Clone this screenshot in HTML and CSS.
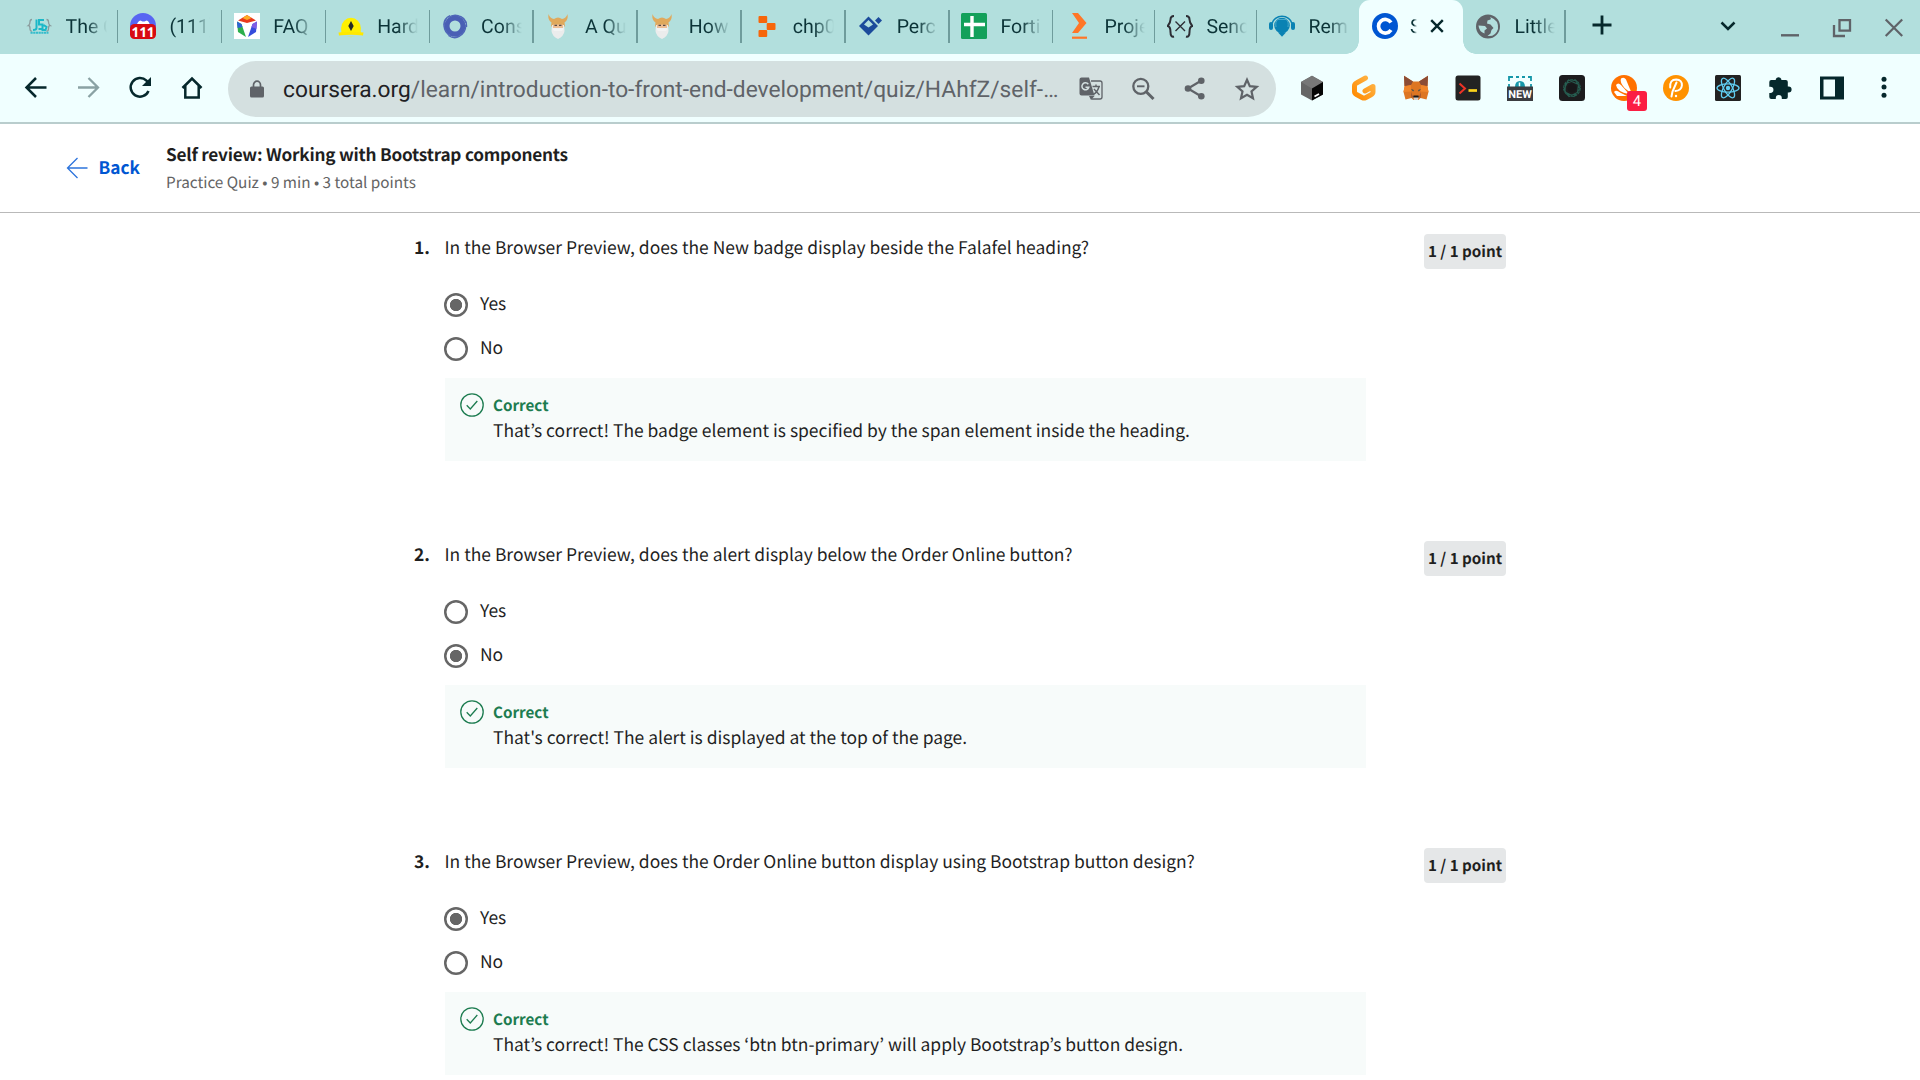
FILE: index.html
```html
<!DOCTYPE html>
<html lang="en">
<head>
<meta charset="utf-8">
<title>Self review: Working with Bootstrap components</title>
<link rel="stylesheet" href="styles.css">
</head>
<body>
<div class="tabstrip">
  <div class="tab">
    <svg class="fav" viewBox="0 0 26 26"><g fill="none" stroke="#8a9a9c" stroke-width="1.3"><path d="M6 6.500Q4 6.500 4 9t-1.500 3.500q1.500 0 1.500 3t2 2.500M20.500 6.500q2 0 2 2.500t1.500 3.500q-1.500 0-1.500 3t-2 2.500"/></g><g fill="none" stroke="#1cb8c8" stroke-width="2"><path d="M10.500 6.500v8.500q0 2-3.500 2M18 7h-5v4.500h3.500v4.500h-4M17.500 12l3 2-1 3h-4"/></g><path d="M4.500 19.700h18" stroke="#35bccb" stroke-width="2" stroke-dasharray="2.200 .5"/></svg>
    <span class="tab-title">The C</span></div>
  <div class="tab">
    <svg class="fav" viewBox="0 0 26 26"><circle cx="13" cy="13" r="13" fill="#5865f2"/><path d="M6.500 13q1-5 4-5.500l2 1h2l2-1q3 .5 3.500 5.500z" fill="#fff"/><rect y="11" width="26" height="15" rx="4.500" fill="#d80b12"/><text x="13" y="24" class="fav-count">111</text></svg>
    <span class="tab-title">(111)</span></div>
  <div class="tab">
    <svg class="fav" viewBox="0 0 26 26"><path fill="#fff" d="M0 0h26v26H0z"/><path d="M13 2l9 5.500-9 2.500-9-2.500z" fill="#e8391d"/><path d="M13 2l4.500 3-4.500 2-4.500-2z" fill="#ffab24"/><path d="M3 8.500l4.500 2.500 4.500 13-8-5z" fill="#2cae4b"/><path d="M3 8.500l4.500 2.500 1 3-5 1z" fill="#2f62d5"/><path d="M23 8.500L18.500 11 14 24l8-5z" fill="#344cdc"/><path d="M23 8.500L18.500 11l-1 3 5 2z" fill="#7f5ce3"/></svg>
    <span class="tab-title">FAQ</span></div>
  <div class="tab">
    <svg class="fav" viewBox="0 0 26 26"><circle cx="13" cy="14.500" r="9.700" fill="#fff000"/><path d="M3.300 14.500h19.400V21H3.300z" fill="#fff000"/><path d="M.5 19.500q12.500-1.500 25 0l-.5 3H1z" fill="#ffe800"/><path d="M2 22.700q11-2 22 0v1H2z" fill="#b2dfdd"/><path d="M13 8l2.700 5-2.700 5-2.700-5z" fill="#262b27"/></svg>
    <span class="tab-title">Hard</span></div>
  <div class="tab">
    <svg class="fav" viewBox="0 0 26 26"><circle cx="13" cy="13" r="8" fill="none" stroke="#4a5fb5" stroke-width="5"/><g fill="none" stroke="#4f66b8" stroke-width="1.200"><path id="swirl" d="M3 17Q-1 7 8 2.500M5 20Q-.5 12 5 5M9 23Q2 20 2 12"/><use href="#swirl" transform="rotate(120 13 13)"/><use href="#swirl" transform="rotate(240 13 13)"/></g></svg>
    <span class="tab-title">Cons</span></div>
  <div class="tab">
    <svg class="fav" viewBox="0 0 26 26"><g id="viking"><path d="M3.500 1q1.500 4.500 5.500 5 4-3 8 0 4-.5 5.500-5 1 6-3 8.500l.5 4h-14l.5-4q-4-2.500-3-8.500z" fill="#e0a95c"/><path d="M7 12h12l.5 6q-.5 5-6.500 8-6-3-6.500-8z" fill="#ebecec"/><path d="M8 11.500h10v3.500H8z" fill="#edbd94"/><path d="M9.500 12.300h2.500m2 0h2.500M12 16.500h2" stroke="#594b44" stroke-width="1.200"/><path d="M7 15.500q3-1 6 0 3-1 6 0l-2 2.500h-8z" fill="#f2f3f3"/></g></svg>
    <span class="tab-title">A Qu</span></div>
  <div class="tab">
    <svg class="fav" viewBox="0 0 26 26"><use href="#viking"/></svg>
    <span class="tab-title">How</span></div>
  <div class="tab">
    <svg class="fav" viewBox="0 0 26 26"><g fill="#f7660a"><rect x="5.500" y="3" width="8.700" height="7" rx="1"/><rect x="13.700" y="10" width="8.800" height="7" rx="1"/><rect x="5.500" y="17" width="8.700" height="7" rx="1"/></g></svg>
    <span class="tab-title">chp0</span></div>
  <div class="tab">
    <svg class="fav" viewBox="0 0 26 26"><path d="M11.500 3.500l9.500 9.500-9.500 9.500L2 13z" fill="#1b4b9b"/><path d="M11.500 7l4.500 4.500-4.500 3L7 11.500z" fill="#b2dfdd"/><path d="M21.500 4l3.500 3.500-3.500 3.500L18 7.500z" fill="#1b4b9b"/></svg>
    <span class="tab-title">Perc</span></div>
  <div class="tab">
    <svg class="fav" viewBox="0 0 26 26"><rect width="26" height="26" rx="1.500" fill="#13a05a"/><path d="M11 3v21M3 11.500h21" stroke="#fff" stroke-width="3.400"/></svg>
    <span class="tab-title">Forti</span></div>
  <div class="tab tab--narrow">
    <svg class="fav" viewBox="0 0 26 26"><path d="M7 0h6l8.500 10L13 20H7l7-10z" fill="#ff7627"/><path d="M7 24.700h15" stroke="#ff7627" stroke-width="2.200"/></svg>
    <span class="tab-title">Proje</span></div>
  <div class="tab tab--narrow">
    <svg class="fav" viewBox="0 0 26 26"><g fill="none" stroke="#2d2e35" stroke-width="2"><path d="M7 3Q3.500 3 3.500 6.500T.7 13q2.800.500 2.800 6T7 23.500M19 3q3.500 0 3.500 3.500t2.800 6.500q-2.800.500-2.800 6T19 23.500"/><path d="M8.500 8.500l9.500 9.500m0-9.500L8.500 18" stroke-width="1.400"/></g></svg>
    <span class="tab-title">Send</span></div>
  <div class="tab tab--narrow tab--before-active">
    <svg class="fav" viewBox="0 0 26 26"><path d="M3 10.500a10.200 9 0 0 1 20 0" fill="none" stroke="#0a82b3" stroke-width="1.500"/><circle cx="13" cy="12.500" r="7.800" fill="#0a82b3"/><path d="M7 14q-1-6 2-7.500h8q3 1.500 2 7.500" fill="none" stroke="#58b4d0" stroke-width=".8"/><rect y="9" width="4" height="8" rx="2" fill="#0a82b3"/><rect x="22" y="9" width="4" height="8" rx="2" fill="#0a82b3"/><path d="M9 19.500h8L13 23.700z" fill="#0a82b3"/></svg>
    <span class="tab-title">Rem</span></div>
  <div class="tab tab--active">
    <svg class="fav" viewBox="0 0 26 26"><circle cx="13" cy="13" r="13" fill="#0056d2"/><path d="M19 9.500A6.800 6.800 0 1 0 19 17" fill="none" stroke="#fff" stroke-width="3.700"/></svg>
    <span class="tab-title tab-title--short">S</span>
    <svg class="tab-close" viewBox="0 0 14 14"><path d="M1.200 1.200l11.600 11.600m0-11.600L1.200 12.800" stroke="#06282c" stroke-width="2.400"/></svg></div>
  <div class="tab tab--last">
    <svg class="fav" viewBox="0 0 26 26"><circle cx="13" cy="13.500" r="12" fill="#5f6368"/><path d="M15 4q1.500 1 .5 2.500l-3 1-.5 3 3.500 1 3 3.500-2 2-1 3.500-3 2.500q8 1 10.500-7 1-9-8-12zM3.500 12.500l6.500.5 2 2.500-2.500 2 0 3q-5.500-2-6-8z" fill="#b2dfdd"/></svg>
    <span class="tab-title">Little</span></div>
  <svg class="newtab" viewBox="0 0 20 20"><path d="M10 .5v19M.5 10h19" stroke="#06282c" stroke-width="2.800"/></svg>
  <div class="window-controls">
    <svg class="tab-search" viewBox="0 0 24 24"><path d="M5.500 8.500l6.500 6.500 6.500-6.500" fill="none" stroke="#06282c" stroke-width="2.500"/></svg>
    <svg viewBox="0 0 24 24"><path d="M3 21.300h18" stroke="#5f6368" stroke-width="2.400"/></svg>
    <svg viewBox="0 0 24 24"><path d="M9.500 6.200h10.500v10.500H9.500zM4 11v11h11" fill="none" stroke="#5f6368" stroke-width="2.300"/></svg>
    <svg viewBox="0 0 24 24"><path d="M3.700 5.500l16.500 16.500m0-16.500L3.700 22" stroke="#5f6368" stroke-width="2.200"/></svg>
  </div>
</div>

<div class="toolbar">
  <div class="nav-buttons">
    <svg viewBox="0 0 26 26"><path d="M23.500 12.500H3.500M13 3l-9.500 9.500L13 22" fill="none" stroke="#06282c" stroke-width="2.500"/></svg>
    <svg viewBox="0 0 26 26"><path d="M3 12.500h20M13.500 3l9.500 9.500-9.500 9.500" fill="none" stroke="#8aa2a4" stroke-width="2.300"/></svg>
    <svg viewBox="0 0 26 26"><path d="M21.500 16A9.300 9.300 0 1 1 19.500 5.700L21.500 8" fill="none" stroke="#06282c" stroke-width="2.500"/><path d="M24 2v9h-9z" fill="#06282c"/></svg>
    <svg viewBox="0 0 26 26"><path d="M3.500 13L13 3.500l9.500 9.500M6.300 11v11.500h13.400V11" fill="none" stroke="#06282c" stroke-width="2.500"/></svg>
  </div>
  <div class="omnibox">
    <svg class="lock" viewBox="0 0 14 18"><rect y="6.500" width="14" height="11" rx="1.500" fill="#5f6368"/><path d="M3.500 7.500V5a3.500 3.800 0 0 1 7 0v2.500" fill="none" stroke="#5f6368" stroke-width="1.700"/></svg>
    <span class="url"><span class="url-host">coursera.org</span>/learn/introduction-to-front-end-development/quiz/HAhfZ/self-…</span>
    <div class="omnibox-actions">
      <svg viewBox="0 0 26 26"><path d="M13 5h9q2 0 2 2v14q0 2-2 2h-8.500" fill="none" stroke="#5f6368" stroke-width="1.300"/><path d="M3.500 1.500h7.500l5.500 18H3.500q-2 0-2-2v-14q0-2 2-2zM11 20h5.500L13 24z" fill="#5f6368"/><path d="M10.300 8.200a3.500 3.500 0 1 0 .5 3H7.500" fill="none" stroke="#d4e0e0" stroke-width="1.500"/><path d="M14.500 10.500H22M18 8.500v2M21 10.500q-1 5-5.500 8M16 13l5.500 6" fill="none" stroke="#5f6368" stroke-width="1.400"/></svg>
      <svg viewBox="0 0 26 26"><circle cx="10.800" cy="10.300" r="7.500" fill="none" stroke="#5f6368" stroke-width="2.300"/><path d="M7 10.300h7.500" stroke="#5f6368" stroke-width="1.900"/><path d="M16 15.500l7.500 7.500" stroke="#5f6368" stroke-width="3"/></svg>
      <svg viewBox="0 0 26 26"><g fill="#5f6368"><circle cx="19.300" cy="4.800" r="3.300"/><circle cx="6" cy="12.500" r="3.300"/><circle cx="19.300" cy="20.300" r="3.300"/></g><path d="M19 4.800L6 12.500l13 7.800" fill="none" stroke="#5f6368" stroke-width="2.200"/></svg>
      <svg viewBox="0 0 26 26"><path d="M13 3.700l2.800 6.400 6.900.7-5.200 4.600 1.500 6.800-6-3.500-6 3.500 1.500-6.800-5.200-4.600 6.900-.7z" fill="none" stroke="#5f6368" stroke-width="2.200"/></svg>
    </div>
  </div>
  <div class="extensions">
    <svg viewBox="0 0 26 26"><path d="M13 .8l11 6.200v12.500l-11 6-11-6V7z" fill="#666"/><path d="M13 .8L24 7l-11 6.500L2 7z" fill="#777"/><path d="M24 7v12.500l-11 6v-12z" fill="#050505"/><path d="M15.500 21.500l4.500-2.500" stroke="#fff" stroke-width="1.800"/></svg>
    <svg viewBox="0 0 26 26"><defs><linearGradient id="gp" x1="1" y1="0" x2="0" y2="1"><stop offset="0" stop-color="#ffb64a"/><stop offset="1" stop-color="#ff8a00"/></linearGradient></defs><path d="M14.500 3L5.500 8q-2 1-2 3v5.500q0 2 2 3l6 3.200q1.500.8 3 0l5.500-3q2-1 2-3v-5.200L14 16" fill="none" stroke="url(#gp)" stroke-width="5" stroke-linecap="round" stroke-linejoin="round"/></svg>
    <svg viewBox="0 0 26 26"><path d="M1 .8l9 5.700h6l9-5.700L24.500 12l1 5-2 7.500-6-1.500-2 2h-5l-2-2-6 1.500-2-7.500 1-5z" fill="#dd7623"/><path d="M1 .8l9 5.700L8 10l-6.500 1zM25 .8l-9 5.700 2 3.500 6.500 1z" fill="#8b4c35"/><path d="M8 10l-6.500 1.500L.5 17l7.500-.5zM18 10l6.500 1.500 1 5.500-7.500-.5z" fill="#f0852a"/><path d="M8 17l2 5-1.500 1zM18 17l-2 5 1.500 1z" fill="#9a5030"/><path d="M10.500 22h5l-.5 3h-4z" fill="#d8cfc8"/><path d="M10.500 20.500h5l.3 2h-5.600z" fill="#17181b"/><path d="M8 14l2.800 1-.5 1.500zM18 14l-2.800 1 .5 1.500z" fill="#254a58"/></svg>
    <svg viewBox="0 0 26 26"><rect x=".5" y=".5" width="25" height="25" rx="2.500" fill="#232323"/><path d="M4.500 8.500l5.500 5-5.500 5" fill="none" stroke="#ed3326" stroke-width="2"/><path d="M13.500 15.500h8.500" stroke="#fcd31c" stroke-width="2.700"/></svg>
    <svg viewBox="0 0 26 26"><path d="M2 6V2h4m3 0h3m3 0h3m3 0h3v4M2 9v3m22-3v3" fill="none" stroke="#1597a9" stroke-width="1.800"/><path d="M8 12q0-6 5-6t5 6" fill="#1597a9"/><path d="M12.500 7.500v4" stroke="#f0ffff" stroke-width="1.500"/><path d="M0 11.500h26V26H0z" fill="#3b3c40"/><text x="13" y="22.800" class="ext-new">NEW</text></svg>
    <svg viewBox="0 0 26 26"><rect width="26" height="26" rx="3.500" fill="#1c1c1e"/><g fill="none" stroke="#265e51" stroke-width="1.100"><circle cx="13" cy="13" r="8.300" stroke-dasharray="3 .7"/><path d="M9.500 5l10 4.500-1 8L10 21.500l-5-7zM16.500 5l-10 3.500-.5 8.500 9 4.500 6-8z"/></g><circle cx="13" cy="13" r="4.500" fill="#171719"/></svg>
    <div class="ext-badged">
      <svg viewBox="0 0 26 26"><circle cx="13" cy="13" r="13" fill="#ff7100"/><g fill="#fff"><path d="M10 3.500q3-2 5 1L21 19l-7.500-6q-5-6-3.500-9.500z"/><path d="M5 10q2-3 5 0l8 9q-12-2-13-9z"/><path d="M3 17q2-2.500 6 .5l7 3.500H6z"/></g></svg>
      <span class="ext-count">4</span>
    </div>
    <svg viewBox="0 0 26 26"><circle cx="13" cy="13" r="13" fill="#ff9200"/><path d="M7.200 12.500q-.7-8 6-8 6 .3 5.700 6-.5 5-6.500 5.500M13.500 7.500l-4 9-1 5" fill="none" stroke="#fff" stroke-width="2" stroke-linecap="round"/><circle cx="13" cy="21" r="1.200" fill="#fff"/></svg>
    <svg viewBox="0 0 26 26"><rect width="26" height="26" rx="1.500" fill="#222"/><g fill="none" stroke="#61cef2" stroke-width="1.300"><ellipse cx="13" cy="13" rx="11" ry="4.200"/><ellipse cx="13" cy="13" rx="11" ry="4.200" transform="rotate(60 13 13)"/><ellipse cx="13" cy="13" rx="11" ry="4.200" transform="rotate(120 13 13)"/></g><circle cx="13" cy="13" r="2.200" fill="#61cef2"/></svg>
    <svg viewBox="0 0 26 26"><path d="M1.500 7Q1.500 5 3.500 5H8V4a3 3 0 0 1 5.500 0v1h4.500q2 0 2 2v4.500h.800a3 3 0 0 1 0 6h-.800V22q0 2-2 2H14v-1a3 3 0 0 0-6 0v1H3.500q-2 0-2-2v-4h1a3 3 0 0 0 0-6.300h-1z" fill="#06282c" transform="translate(.8)"/></svg>
    <svg viewBox="0 0 26 26"><path d="M1 1.500h24v23H1z" fill="#06282c"/><path d="M4.500 4.500h11.500v17H4.500z" fill="#f0ffff"/></svg>
    <svg viewBox="0 0 26 26"><g fill="#06282c"><circle cx="13" cy="4.300" r="2.500"/><circle cx="13" cy="12" r="2.500"/><circle cx="13" cy="20.300" r="2.500"/></g></svg>
  </div>
</div>

<header class="quiz-header">
  <div class="back">
    <svg viewBox="0 0 22 22"><path d="M21.500 11H1.500M11.500 1L1.500 11l10 10" fill="none" stroke="#2d74dc" stroke-width="1.300"/></svg>
    <span>Back</span>
  </div>
  <div class="quiz-heading">
    <h1>Self review: Working with Bootstrap components</h1>
    <p>Practice Quiz • 9 min • 3 total points</p>
  </div>
</header>

<main class="quiz">
  <section class="question">
    <span class="number">1.</span>
    <div class="question-body">
      <p class="prompt">In the Browser Preview, does the New badge display beside the Falafel heading?</p>
      <div class="options">
        <div class="option"><i class="radio radio--checked"></i><span>Yes</span></div>
        <div class="option"><i class="radio"></i><span>No</span></div>
      </div>
      <div class="feedback">
        <svg viewBox="0 0 24 24"><circle cx="12" cy="12" r="11.200"/><path d="M6.700 12.300l3.600 3.700 7-8"/></svg>
        <div><h2>Correct</h2><p>That’s correct! The badge element is specified by the span element inside the heading.</p></div>
      </div>
    </div>
    <span class="points">1 / 1 point</span>
  </section>
  <section class="question">
    <span class="number">2.</span>
    <div class="question-body">
      <p class="prompt">In the Browser Preview, does the alert display below the Order Online button?</p>
      <div class="options">
        <div class="option"><i class="radio"></i><span>Yes</span></div>
        <div class="option"><i class="radio radio--checked"></i><span>No</span></div>
      </div>
      <div class="feedback">
        <svg viewBox="0 0 24 24"><circle cx="12" cy="12" r="11.200"/><path d="M6.700 12.300l3.600 3.700 7-8"/></svg>
        <div><h2>Correct</h2><p>That's correct! The alert is displayed at the top of the page.</p></div>
      </div>
    </div>
    <span class="points">1 / 1 point</span>
  </section>
  <section class="question">
    <span class="number">3.</span>
    <div class="question-body">
      <p class="prompt">In the Browser Preview, does the Order Online button display using Bootstrap button design?</p>
      <div class="options">
        <div class="option"><i class="radio radio--checked"></i><span>Yes</span></div>
        <div class="option"><i class="radio"></i><span>No</span></div>
      </div>
      <div class="feedback">
        <svg viewBox="0 0 24 24"><circle cx="12" cy="12" r="11.200"/><path d="M6.700 12.300l3.600 3.700 7-8"/></svg>
        <div><h2>Correct</h2><p>That’s correct! The CSS classes ‘btn btn-primary’ will apply Bootstrap’s button design.</p></div>
      </div>
    </div>
    <span class="points">1 / 1 point</span>
  </section>
</main>
</body>
</html>
```
FILE: styles.css
```css
* { box-sizing: border-box; }
body {
  margin: 0;
  height: 1080px;
  overflow: hidden;
  background: #fff;
  color: #1f1f1f;
  font-family: "Noto Sans CJK KR", "Noto Sans", sans-serif;
  text-rendering: geometricPrecision;
}
h1, h2, p { margin: 0; }
svg { display: block; flex: none; }

/* Browser tabs */
.tabstrip {
  display: flex;
  height: 54px;
  padding-left: 14.500px;
  background: #b2dfdd;
  font-family: Roboto, sans-serif;
}
.tab {
  display: flex;
  align-items: center;
  flex: none;
  position: relative;
  width: 103.900px;
  padding: 0 0 2px 11.500px;
}
.tab--narrow { width: 102px; }
.tab--last { width: 102.500px; }
.tab::after {
  content: "";
  position: absolute;
  right: 0;
  top: 10px;
  width: 1.500px;
  height: 33px;
  background: #6f9c9c;
}
.fav { width: 26px; height: 26px; }
.fav-count { font: bold 13.500px "Noto Sans", sans-serif; fill: #fff; text-anchor: middle; }
.tab-title {
  width: 41px;
  margin: 1px 0 0 13.500px;
  overflow: hidden;
  white-space: nowrap;
  font-size: 19.500px;
  line-height: 26px;
  color: #0b3337;
  -webkit-mask-image: linear-gradient(90deg, #000 50%, transparent);
  mask-image: linear-gradient(90deg, #000 50%, transparent);
}
.tab--before-active::after { display: none; }
.tab--active {
  width: 104px;
  background: #f0ffff;
  border-radius: 11px 11px 0 0;
  padding-left: 12.500px;
}
.tab--active::before,
.tab--active::after {
  content: "";
  position: absolute;
  top: auto;
  bottom: 0;
  width: 13px;
  height: 13px;
}
.tab--active::before {
  left: -13px;
  background: radial-gradient(circle at 0 0, transparent 12.500px, #f0ffff 13px);
}
.tab--active::after {
  right: -13px;
  background: radial-gradient(circle at 100% 0, transparent 12.500px, #f0ffff 13px);
}
.tab-title--short { width: 7px; margin-left: 12px; }
.tab-close { width: 14px; height: 14px; margin-left: 13px; }
.newtab { width: 20px; height: 20px; margin: 15px 0 0 26px; }
.window-controls {
  display: flex;
  gap: 28px;
  margin: 14px 0 0 104px;
}
.window-controls svg { width: 24px; height: 24px; }
.window-controls .tab-search { margin-right: 10px; }

/* Address bar */
.toolbar {
  display: flex;
  height: 70px;
  padding: 7px 0 0 10px;
  background: #f0ffff;
  border-bottom: 2px solid #b9cdcd;
  font-family: Roboto, sans-serif;
}
.nav-buttons,
.extensions,
.omnibox-actions {
  display: flex;
  align-items: center;
  height: 54px;
}
.nav-buttons svg,
.extensions > svg,
.omnibox-actions svg { width: 26px; height: 26px; margin: 0 13px; }
.omnibox {
  display: flex;
  align-items: center;
  width: 1048px;
  height: 56px;
  margin: 0 10px;
  padding: 0 3px 0 22px;
  border-radius: 28px;
  background: #d4e0e0;
}
.lock { width: 14px; height: 18px; }
.url {
  flex: 1;
  width: 0;
  margin: 1px 0 0 19px;
  white-space: nowrap;
  font-size: 22.750px;
  line-height: 30px;
  color: #5f6368;
}
.url-host { color: #1f2124; }
.ext-badged { position: relative; width: 52px; padding-left: 13px; }
.ext-badged svg { width: 26px; height: 26px; }
.ext-count {
  position: absolute;
  left: 29px;
  top: 16px;
  width: 20px;
  height: 20px;
  border-radius: 3px;
  background: #fb1e43;
  color: #fff;
  font-size: 15px;
  line-height: 20px;
  text-align: center;
}
.ext-new { font: bold 11px Roboto, sans-serif; fill: #fff; text-anchor: middle; }

/* Quiz header */
.quiz-header {
  display: flex;
  height: 89px;
  padding-left: 66px;
  border-bottom: 1px solid #b9b9b9;
}
.back {
  display: flex;
  align-items: center;
  width: 100px;
  height: 88px;
  gap: 10.500px;
  color: #0056d2;
  font-size: 17.300px;
  font-weight: 700;
  line-height: 24px;
}
.back svg { width: 22px; height: 22px; }
.back span { padding-bottom: 2px; }
.quiz-heading { padding-top: 17px; }
.quiz-heading h1 { font-size: 17.200px; line-height: 26px; letter-spacing: -.230px; }
.quiz-heading p { color: #636363; font-size: 15.300px; line-height: 31px; }

/* Questions */
.quiz { padding: 21px 0 0 414px; }
.question {
  display: flex;
  align-items: flex-start;
  height: 307px;
}
.question:last-child { height: auto; }
.number {
  width: 30.500px;
  font-size: 17.450px;
  font-weight: 700;
  line-height: 27px;
}
.question-body { width: 921.500px; }
.prompt { font-size: 17.450px; line-height: 27px; }
.options {
  display: flex;
  flex-direction: column;
  gap: 20px;
  margin: 31.500px 0 17.500px -1px;
}
.option {
  display: flex;
  height: 24px;
  gap: 12px;
  font-size: 17.450px;
  line-height: 21px;
}
.radio {
  width: 24.500px;
  height: 24.500px;
  box-shadow: inset 0 0 0 2.500px #666;
  border-radius: 50%;
}
.radio--checked { background: radial-gradient(circle, #666 5.800px, transparent 6.500px); }
.feedback {
  display: flex;
  gap: 9.500px;
  height: 83px;
  padding: 14px 0 0 15px;
  background: #f7fbfa;
}
.feedback svg {
  width: 24px;
  height: 24px;
  margin-top: 1px;
  fill: none;
  stroke: #1d7c50;
  stroke-width: 1.300;
}
.feedback h2 { color: #1d7c50; font-size: 15.200px; line-height: 26px; }
.feedback p { font-size: 17.450px; line-height: 25px; }
.points {
  height: 35px;
  width: 82px;
  margin-left: 58px;
  border-radius: 4px;
  background: #e5e7e8;
  font-size: 15.200px;
  font-weight: 700;
  line-height: 34px;
  text-align: center;
  white-space: nowrap;
}
```
